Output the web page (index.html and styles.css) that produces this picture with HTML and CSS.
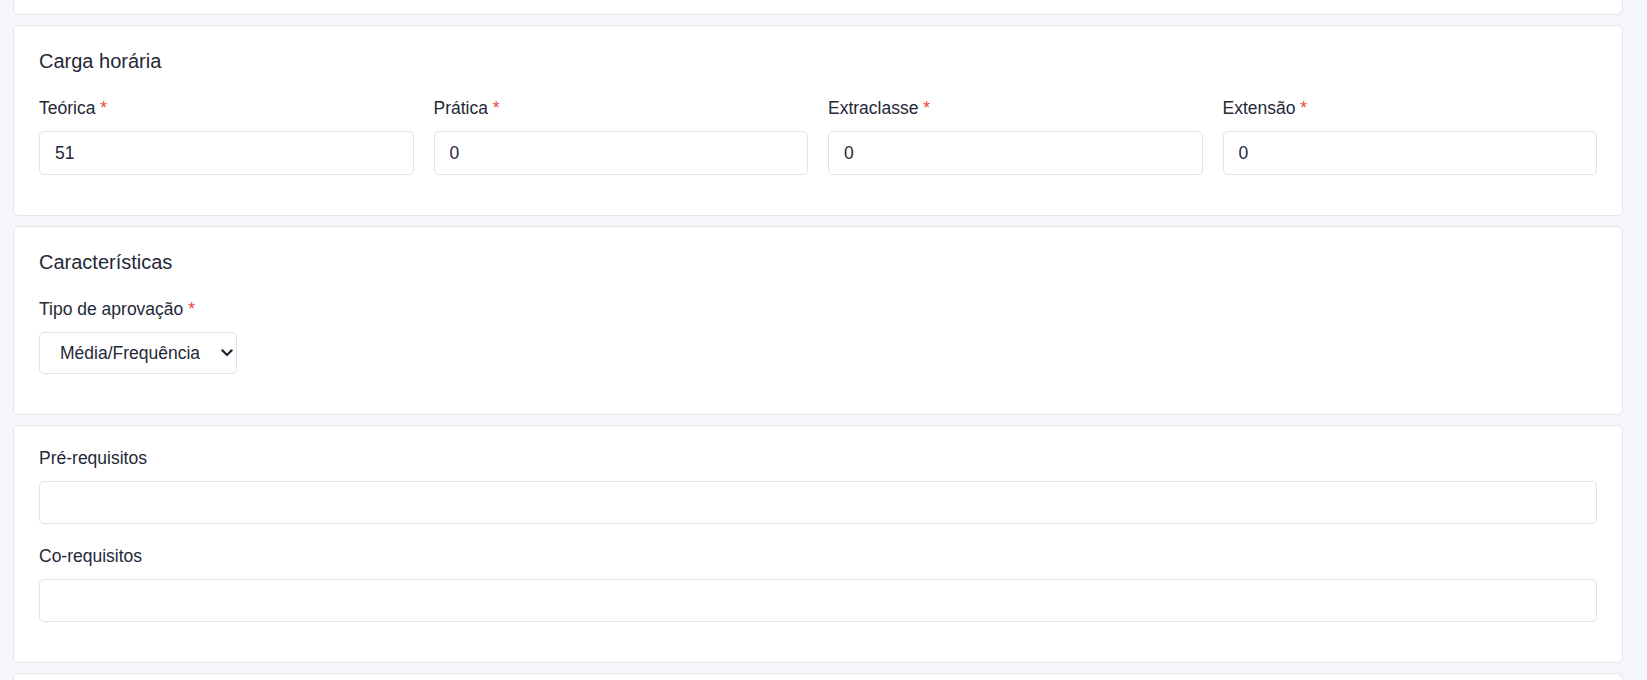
FILE: index.html
```html
<!DOCTYPE html>
<html lang="pt-BR">
<head>
<meta charset="utf-8">
<title>Disciplina</title>
<link rel="stylesheet" href="styles.css">
</head>
<body>
<div class="page">
  <section class="card card-stub"></section>

  <section class="card">
    <h3 class="card-title">Carga horária</h3>
    <div class="grid-4">
      <div class="field">
        <label class="label">Teórica <span class="req">*</span></label>
        <input class="input input-tall" type="text" value="51">
      </div>
      <div class="field">
        <label class="label">Prática <span class="req">*</span></label>
        <input class="input input-tall" type="text" value="0">
      </div>
      <div class="field">
        <label class="label">Extraclasse <span class="req">*</span></label>
        <input class="input input-tall" type="text" value="0">
      </div>
      <div class="field">
        <label class="label">Extensão <span class="req">*</span></label>
        <input class="input input-tall" type="text" value="0">
      </div>
    </div>
  </section>

  <section class="card">
    <h3 class="card-title">Características</h3>
    <div class="field">
      <label class="label">Tipo de aprovação <span class="req">*</span></label>
      <div class="select-wrap">
        <select class="select">
          <option>Média/Frequência</option>
        </select>
        <svg class="chevron" width="12" height="8" viewBox="0 0 12 8" aria-hidden="true">
          <polyline points="1.4,1.4 6,6 10.6,1.4" fill="none" stroke="#1f2937" stroke-width="2.2" stroke-linecap="round" stroke-linejoin="round"/>
        </svg>
      </div>
    </div>
  </section>

  <section class="card">
    <div class="field">
      <label class="label">Pré-requisitos</label>
      <input class="input" type="text" value="">
    </div>
    <div class="field">
      <label class="label">Co-requisitos</label>
      <input class="input" type="text" value="">
    </div>
  </section>

  <section class="card card-next"></section>
</div>
</body>
</html>
```

FILE: styles.css
```css
* {
  box-sizing: border-box;
}

html, body {
  margin: 0;
  padding: 0;
  background: #f5f6fa;
  font-family: "Liberation Sans", Arial, sans-serif;
  color: #1f2937;
  overflow: hidden;
}

.page {
  padding: 0 24px 0 13px;
}

.card {
  background: #ffffff;
  border: 1px solid #e2e6ed;
  border-radius: 6px;
  padding: 20px 25px;
  margin-bottom: 10px;
}

.card-stub {
  height: 15px;
  padding: 0;
  border-top: none;
  border-radius: 0 0 6px 6px;
}

.card-next {
  height: 60px;
  border-bottom: none;
  border-radius: 6px 6px 0 0;
}

.card-title {
  margin: 0 0 20px;
  font-size: 20px;
  line-height: 30px;
  font-weight: 400;
  color: #1f2937;
}

.grid-4 {
  display: grid;
  grid-template-columns: repeat(4, 1fr);
  column-gap: 20px;
}

.field {
  margin-bottom: 20px;
}

.label {
  display: block;
  font-size: 17.5px;
  line-height: 24px;
  margin-bottom: 11px;
  color: #1f2937;
}

.req {
  color: #ef4444;
}

.input {
  display: block;
  width: 100%;
  height: 43px;
  padding: 0 15px;
  border: 1px solid #dfe3ea;
  border-radius: 5px;
  background: #ffffff;
  font-family: "Liberation Sans", Arial, sans-serif;
  font-size: 17.5px;
  color: #1f2937;
  outline: none;
}

.input-tall {
  height: 44px;
}

.select-wrap {
  position: relative;
  width: 198px;
}

.select {
  display: block;
  width: 100%;
  height: 42px;
  padding: 0 30px 0 20px;
  border: 1px solid #dfe3ea;
  border-radius: 5px;
  background: #ffffff;
  font-family: "Liberation Sans", Arial, sans-serif;
  font-size: 17.5px;
  color: #1f2937;
  appearance: none;
  -webkit-appearance: none;
  outline: none;
}

.chevron {
  position: absolute;
  right: 4px;
  top: 17px;
  pointer-events: none;
}
```
